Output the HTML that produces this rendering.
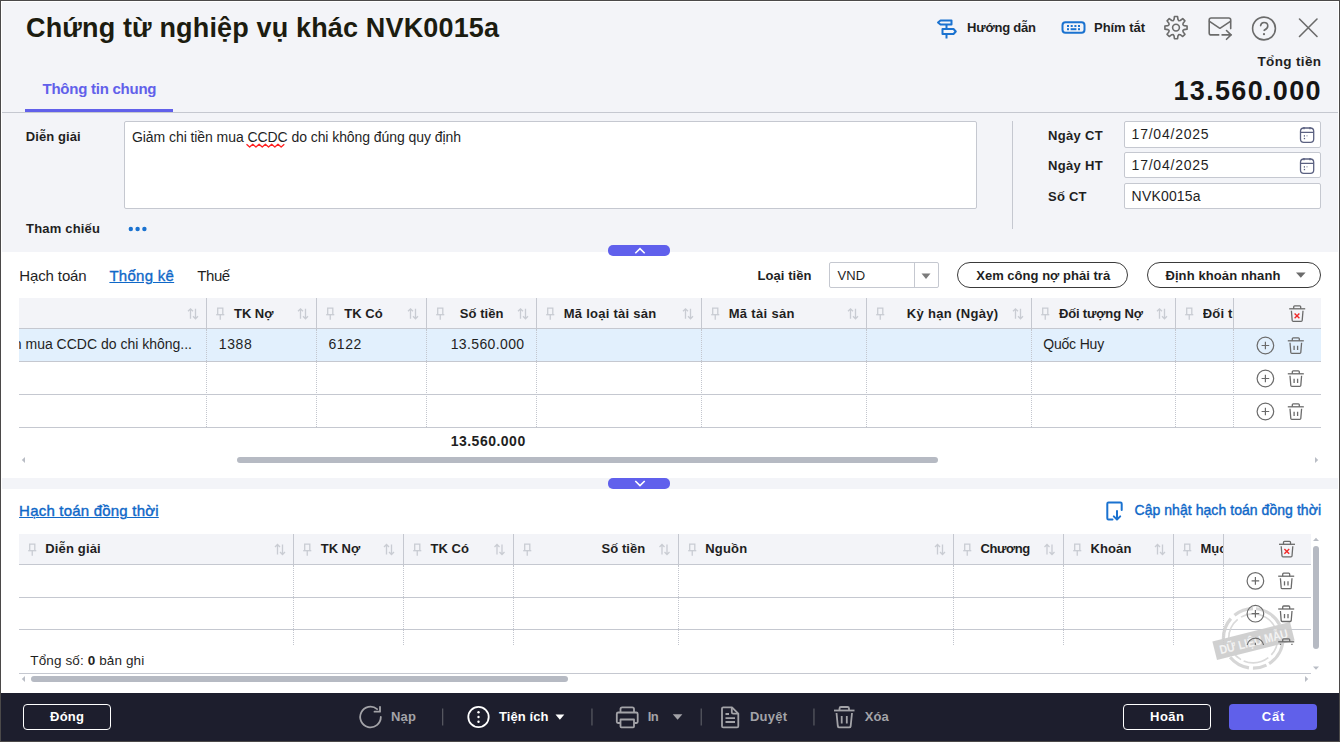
<!DOCTYPE html>
<html><head><meta charset="utf-8"><title>Chứng từ nghiệp vụ khác</title>
<style>
html,body{margin:0;padding:0;}
body{width:1340px;height:742px;overflow:hidden;position:relative;background:#4b4949;font-family:'Liberation Sans', sans-serif;}
svg{position:absolute;overflow:visible;}
</style></head><body>
<div style="position:absolute;left:1px;top:1px;width:1338px;height:740px;background:#ffffff;"></div>
<div style="position:absolute;left:2px;top:2px;width:1336px;height:250px;background:#f3f4f8;"></div>
<div style="position:absolute;left:2px;top:112px;width:1336px;height:1px;background:#c5c8d0;"></div>
<div style="position:absolute;left:25px;top:109px;width:148px;height:3px;background:#6160ea;"></div>
<div style="position:absolute;left:2px;top:478px;width:1336px;height:11px;background:#f3f4f8;"></div>
<div style="position:absolute;left:1px;top:693px;width:1338px;height:48px;background:#1d1e2d;"></div>
<svg style="left:0;top:0" width="1340" height="60"><g fill="none" stroke="#1a72d0" stroke-width="2" stroke-linejoin="round">
<path d="M940.5 20.5 H951.5 V24.5 H940.5 L938 22.5 Z"/>
<path d="M942.5 29 H953.5 L955.8 31.5 L953.5 34 H942.5 Z"/>
<path d="M946.5 25 V29 M946.5 34 V38.5"/>
</g>
<g fill="none" stroke="#1a72d0" stroke-width="2"><rect x="1062.5" y="22.3" width="22" height="10.4" rx="3"/></g>
<g fill="#1a72d0"><rect x="1067" y="25" width="2" height="2"/><rect x="1070.7" y="25" width="2" height="2"/><rect x="1074.4" y="25" width="2" height="2"/><rect x="1078" y="25" width="2" height="2"/>
<rect x="1067" y="28.2" width="2" height="2"/><rect x="1070.6" y="28.2" width="5.8" height="2"/><rect x="1078" y="28.2" width="2" height="2"/></g>
</svg>
<svg style="left:0;top:0" width="1340" height="60"><g fill="none" stroke="#6b6b6b" stroke-width="1.6" stroke-linejoin="round" stroke-linecap="round">
<path d="M1173.13 20.67 L1173.99 19.55 L1174.44 16.51 L1177.56 16.51 L1178.01 19.55 L1178.87 20.67 L1180.27 20.49 L1182.74 18.66 L1184.94 20.86 L1183.11 23.33 L1182.93 24.73 L1184.05 25.59 L1187.09 26.04 L1187.09 29.16 L1184.05 29.61 L1182.93 30.47 L1183.11 31.87 L1184.94 34.34 L1182.74 36.54 L1180.27 34.71 L1178.87 34.53 L1178.01 35.65 L1177.56 38.69 L1174.44 38.69 L1173.99 35.65 L1173.13 34.53 L1171.73 34.71 L1169.26 36.54 L1167.06 34.34 L1168.89 31.87 L1169.07 30.47 L1167.95 29.61 L1164.91 29.16 L1164.91 26.04 L1167.95 25.59 L1169.07 24.73 L1168.89 23.33 L1167.06 20.86 L1169.26 18.66 L1171.73 20.49 Z"/>
<circle cx="1176" cy="27.6" r="3.4"/>
<path d="M1218.7 34.9 H1211.2 Q1209.2 34.9 1209.2 32.9 V20 Q1209.2 18 1211.2 18 H1228.7 Q1230.7 18 1230.7 20 V28.6"/>
<path d="M1209.5 21.3 L1219.9 28.3 L1230.4 21.3"/>
<path d="M1222.1 34.9 H1231.3 M1226.5 30.5 L1231 34.9 L1226.5 39.3"/>
<circle cx="1264" cy="28.5" r="11.4"/>
<path d="M1260.6 25.7 Q1261 22.5 1264 22.5 Q1267.8 22.5 1267.8 26 Q1267.8 28.4 1264.2 30.3"/>
<path d="M1299.5 19 L1317 36.5 M1317 19 L1299.5 36.5"/>
</g><circle cx="1264" cy="34.2" r="1.1" fill="#6b6b6b"/></svg>
<div style="position:absolute;left:124px;top:121px;width:853px;height:88px;background:#ffffff;box-sizing:border-box;border:1px solid #c5c8d0;border-radius:2px;"></div>
<svg style="left:0;top:0" width="1340" height="200"><path d="M246.5 144.2 l3.15 2.8 l3.15 -2.8 l3.15 2.8 l3.15 -2.8 l3.15 2.8 l3.15 -2.8 l3.15 2.8 l3.15 -2.8 l3.15 2.8 l3.15 -2.8 l3.15 2.8 l3.15 -2.8" fill="none" stroke="#ff2020" stroke-width="1.3" stroke-linejoin="round"/></svg>
<svg style="left:0;top:0" width="1340" height="260"><g fill="#1a72d0"><circle cx="130.8" cy="229" r="2.2"/><circle cx="137.6" cy="229" r="2.2"/><circle cx="144.4" cy="229" r="2.2"/></g></svg>
<div style="position:absolute;left:1012px;top:121px;width:1px;height:108px;background:#c5c8d0;"></div>
<div style="position:absolute;left:1124px;top:121px;width:197px;height:27px;background:#ffffff;box-sizing:border-box;border:1px solid #c5c8d0;border-radius:2px;"></div>
<div style="position:absolute;left:1124px;top:152px;width:197px;height:26px;background:#ffffff;box-sizing:border-box;border:1px solid #c5c8d0;border-radius:2px;"></div>
<div style="position:absolute;left:1124px;top:183px;width:197px;height:26px;background:#ffffff;box-sizing:border-box;border:1px solid #c5c8d0;border-radius:2px;"></div>
<svg style="left:0;top:0" width="1340" height="200"><g fill="none" stroke="#5b6181" stroke-width="1.3"><rect x="1300.5" y="128" width="13.2" height="14.3" rx="3.3"/><path d="M1304 127 v2.3 M1310 127 v2.3 M1300.5 132.3 h13.2"/></g><g fill="#5b6181"><rect x="1303.8" y="135.2" width="1.2" height="1.4"/><rect x="1306.4" y="135.2" width="1.2" height="1.2" opacity="0.6"/><rect x="1303.8" y="137.9" width="1.3" height="1.3"/></g></svg>
<svg style="left:0;top:0" width="1340" height="200"><g fill="none" stroke="#5b6181" stroke-width="1.3"><rect x="1300.5" y="159" width="13.2" height="14.3" rx="3.3"/><path d="M1304 158 v2.3 M1310 158 v2.3 M1300.5 163.3 h13.2"/></g><g fill="#5b6181"><rect x="1303.8" y="166.2" width="1.2" height="1.4"/><rect x="1306.4" y="166.2" width="1.2" height="1.2" opacity="0.6"/><rect x="1303.8" y="168.9" width="1.3" height="1.3"/></g></svg>
<div style="position:absolute;left:608px;top:245px;width:62px;height:11px;background:#6060ec;border-radius:5px;"></div>
<svg style="left:0;top:0" width="1340" height="260"><path d="M635.3 253.2 L640 248.6 L644.7 253.2" fill="none" stroke="#fff" stroke-width="1.6"/></svg>
<div style="position:absolute;left:829px;top:262px;width:110px;height:26px;background:#ffffff;box-sizing:border-box;border:1px solid #c5c8d0;border-radius:2px;"></div>
<div style="position:absolute;left:914px;top:263px;width:1px;height:24px;background:#c5c8d0;"></div>
<svg style="left:0;top:0" width="1340" height="300"><path d="M921.5 273.5 H930.5 L926 279 Z" fill="#7b7b7b"/><path d="M1296 272.5 H1305.6 L1300.8 277.8 Z" fill="#6b6b6b"/></svg>
<div style="position:absolute;left:957px;top:262px;width:171px;height:26px;background:transparent;box-sizing:border-box;border:1px solid #3a3a3a;border-radius:13px;"></div>
<div style="position:absolute;left:1147px;top:262px;width:174px;height:26px;background:transparent;box-sizing:border-box;border:1px solid #3a3a3a;border-radius:13px;"></div>
<div style="position:absolute;left:19px;top:298px;width:1302px;height:30px;background:#f3f4f8;"></div>
<div style="position:absolute;left:19px;top:328px;width:1302px;height:1px;background:#c5c8d0;"></div>
<div style="position:absolute;left:19px;top:329px;width:1302px;height:32px;background:#e2f0fd;"></div>
<div style="position:absolute;left:19px;top:361px;width:1302px;height:1px;background:#c5c8d0;"></div>
<div style="position:absolute;left:19px;top:394px;width:1302px;height:1px;background:#c5c8d0;"></div>
<div style="position:absolute;left:19px;top:427px;width:1302px;height:1px;background:#c5c8d0;"></div>
<div style="position:absolute;left:206px;top:298px;width:1px;height:30px;background:#c5c8d0;"></div>
<div style="position:absolute;left:206px;top:329px;width:0;height:98px;border-left:1px dotted #c3c6ce;"></div>
<div style="position:absolute;left:316px;top:298px;width:1px;height:30px;background:#c5c8d0;"></div>
<div style="position:absolute;left:316px;top:329px;width:0;height:98px;border-left:1px dotted #c3c6ce;"></div>
<div style="position:absolute;left:426px;top:298px;width:1px;height:30px;background:#c5c8d0;"></div>
<div style="position:absolute;left:426px;top:329px;width:0;height:98px;border-left:1px dotted #c3c6ce;"></div>
<div style="position:absolute;left:536px;top:298px;width:1px;height:30px;background:#c5c8d0;"></div>
<div style="position:absolute;left:536px;top:329px;width:0;height:98px;border-left:1px dotted #c3c6ce;"></div>
<div style="position:absolute;left:701px;top:298px;width:1px;height:30px;background:#c5c8d0;"></div>
<div style="position:absolute;left:701px;top:329px;width:0;height:98px;border-left:1px dotted #c3c6ce;"></div>
<div style="position:absolute;left:866px;top:298px;width:1px;height:30px;background:#c5c8d0;"></div>
<div style="position:absolute;left:866px;top:329px;width:0;height:98px;border-left:1px dotted #c3c6ce;"></div>
<div style="position:absolute;left:1031px;top:298px;width:1px;height:30px;background:#c5c8d0;"></div>
<div style="position:absolute;left:1031px;top:329px;width:0;height:98px;border-left:1px dotted #c3c6ce;"></div>
<div style="position:absolute;left:1175px;top:298px;width:1px;height:30px;background:#c5c8d0;"></div>
<div style="position:absolute;left:1175px;top:329px;width:0;height:98px;border-left:1px dotted #c3c6ce;"></div>
<div style="position:absolute;left:1233px;top:298px;width:1px;height:30px;background:#c5c8d0;"></div>
<div style="position:absolute;left:1233px;top:329px;width:0;height:98px;border-left:1px dotted #c3c6ce;"></div>
<svg style="left:0;top:0" width="1" height="1"><g fill="none" stroke="#c9ccd3" stroke-width="1.3" stroke-linejoin="miter"><path d="M190.5 318.8 V308.8 M188 311.3 L190.5 308.8 L193 311.3"/><path d="M195.5 308.8 V318.8 M193 316.3 L195.5 318.8 L198 316.3"/></g></svg>
<svg style="left:0;top:0" width="1" height="1"><g fill="none" stroke="#c9ccd3" stroke-width="1.3"><path d="M217.7 314.5 V308.2 H222.8 V314.5"/><path d="M216.2 314.7 H224.3"/><path d="M220.25 314.7 V319.7"/></g></svg>
<svg style="left:0;top:0" width="1" height="1"><g fill="none" stroke="#c9ccd3" stroke-width="1.3" stroke-linejoin="miter"><path d="M300.5 318.8 V308.8 M298 311.3 L300.5 308.8 L303 311.3"/><path d="M305.5 308.8 V318.8 M303 316.3 L305.5 318.8 L308 316.3"/></g></svg>
<svg style="left:0;top:0" width="1" height="1"><g fill="none" stroke="#c9ccd3" stroke-width="1.3"><path d="M327.7 314.5 V308.2 H332.8 V314.5"/><path d="M326.2 314.7 H334.3"/><path d="M330.25 314.7 V319.7"/></g></svg>
<svg style="left:0;top:0" width="1" height="1"><g fill="none" stroke="#c9ccd3" stroke-width="1.3" stroke-linejoin="miter"><path d="M410.5 318.8 V308.8 M408 311.3 L410.5 308.8 L413 311.3"/><path d="M415.5 308.8 V318.8 M413 316.3 L415.5 318.8 L418 316.3"/></g></svg>
<svg style="left:0;top:0" width="1" height="1"><g fill="none" stroke="#c9ccd3" stroke-width="1.3"><path d="M437.7 314.5 V308.2 H442.8 V314.5"/><path d="M436.2 314.7 H444.3"/><path d="M440.25 314.7 V319.7"/></g></svg>
<svg style="left:0;top:0" width="1" height="1"><g fill="none" stroke="#c9ccd3" stroke-width="1.3" stroke-linejoin="miter"><path d="M520.5 318.8 V308.8 M518 311.3 L520.5 308.8 L523 311.3"/><path d="M525.5 308.8 V318.8 M523 316.3 L525.5 318.8 L528 316.3"/></g></svg>
<svg style="left:0;top:0" width="1" height="1"><g fill="none" stroke="#c9ccd3" stroke-width="1.3"><path d="M547.7 314.5 V308.2 H552.8 V314.5"/><path d="M546.2 314.7 H554.3"/><path d="M550.25 314.7 V319.7"/></g></svg>
<svg style="left:0;top:0" width="1" height="1"><g fill="none" stroke="#c9ccd3" stroke-width="1.3" stroke-linejoin="miter"><path d="M685.5 318.8 V308.8 M683 311.3 L685.5 308.8 L688 311.3"/><path d="M690.5 308.8 V318.8 M688 316.3 L690.5 318.8 L693 316.3"/></g></svg>
<svg style="left:0;top:0" width="1" height="1"><g fill="none" stroke="#c9ccd3" stroke-width="1.3"><path d="M712.7 314.5 V308.2 H717.8 V314.5"/><path d="M711.2 314.7 H719.3"/><path d="M715.25 314.7 V319.7"/></g></svg>
<svg style="left:0;top:0" width="1" height="1"><g fill="none" stroke="#c9ccd3" stroke-width="1.3" stroke-linejoin="miter"><path d="M850.5 318.8 V308.8 M848 311.3 L850.5 308.8 L853 311.3"/><path d="M855.5 308.8 V318.8 M853 316.3 L855.5 318.8 L858 316.3"/></g></svg>
<svg style="left:0;top:0" width="1" height="1"><g fill="none" stroke="#c9ccd3" stroke-width="1.3"><path d="M877.7 314.5 V308.2 H882.8 V314.5"/><path d="M876.2 314.7 H884.3"/><path d="M880.25 314.7 V319.7"/></g></svg>
<svg style="left:0;top:0" width="1" height="1"><g fill="none" stroke="#c9ccd3" stroke-width="1.3" stroke-linejoin="miter"><path d="M1015.5 318.8 V308.8 M1013 311.3 L1015.5 308.8 L1018 311.3"/><path d="M1020.5 308.8 V318.8 M1018 316.3 L1020.5 318.8 L1023 316.3"/></g></svg>
<svg style="left:0;top:0" width="1" height="1"><g fill="none" stroke="#c9ccd3" stroke-width="1.3"><path d="M1042.7 314.5 V308.2 H1047.8 V314.5"/><path d="M1041.2 314.7 H1049.3"/><path d="M1045.25 314.7 V319.7"/></g></svg>
<svg style="left:0;top:0" width="1" height="1"><g fill="none" stroke="#c9ccd3" stroke-width="1.3" stroke-linejoin="miter"><path d="M1159.5 318.8 V308.8 M1157 311.3 L1159.5 308.8 L1162 311.3"/><path d="M1164.5 308.8 V318.8 M1162 316.3 L1164.5 318.8 L1167 316.3"/></g></svg>
<svg style="left:0;top:0" width="1" height="1"><g fill="none" stroke="#c9ccd3" stroke-width="1.3"><path d="M1186.7 314.5 V308.2 H1191.8 V314.5"/><path d="M1185.2 314.7 H1193.3"/><path d="M1189.25 314.7 V319.7"/></g></svg>
<div style="position:absolute;left:1202.7px;top:306.5px;width:30px;height:16px;overflow:hidden;"><div style="position:absolute;left:0;top:0;font:bold 13px/13px 'Liberation Sans', sans-serif;color:#1f1f1f;white-space:pre;letter-spacing:0.2px">Đối tượng Có</div></div>
<div style="position:absolute;left:19px;top:337px;width:185px;height:17px;overflow:hidden;"><div style="position:absolute;right:12px;top:0;font:normal 14px/14px 'Liberation Sans', sans-serif;color:#1f1f1f;white-space:pre;letter-spacing:0px">Giảm chi tiền mua CCDC do chi không...</div></div>
<svg style="left:0;top:0" width="1" height="1"><g fill="none" stroke="#6b6b6b" stroke-width="1.3"><path d="M1289.2 308.8 H1305.2"/><path d="M1293.7 308.8 V306.8 Q1293.7 305.8 1294.7 305.8 H1299.7 Q1300.7 305.8 1300.7 306.8 V308.8"/><path d="M1291.4 310.8 L1292.2 320.5 Q1292.3 321.3 1293.2 321.3 H1301.2 Q1302.1000000000001 321.3 1302.2 320.5 L1303.0 310.8"/><path d="M1294.6000000000001 313.40000000000003 l4.8 4.8 M1299.4 313.40000000000003 l-4.8 4.8" stroke="#f02a2a" stroke-width="1.4"/></g></svg>
<svg style="left:0;top:0" width="1" height="1"><g fill="none" stroke="#6b6b6b" stroke-width="1.2"><circle cx="1265.4" cy="345.5" r="8.3"/><path d="M1261.6000000000001 345.5 H1269.2 M1265.4 341.7 V349.3"/></g></svg>
<svg style="left:0;top:0" width="1" height="1"><g fill="none" stroke="#6b6b6b" stroke-width="1.3"><path d="M1287.8 340.8 H1303.8"/><path d="M1292.3 340.8 V338.8 Q1292.3 337.8 1293.3 337.8 H1298.3 Q1299.3 337.8 1299.3 338.8 V340.8"/><path d="M1290.0 342.8 L1290.8 352.5 Q1290.8999999999999 353.3 1291.8 353.3 H1299.8 Q1300.7 353.3 1300.8 352.5 L1301.6 342.8"/><path d="M1294.1 345.8 V350.1 M1297.6 345.8 V350.1"/></g></svg>
<svg style="left:0;top:0" width="1" height="1"><g fill="none" stroke="#6b6b6b" stroke-width="1.2"><circle cx="1265.4" cy="378.5" r="8.3"/><path d="M1261.6000000000001 378.5 H1269.2 M1265.4 374.7 V382.3"/></g></svg>
<svg style="left:0;top:0" width="1" height="1"><g fill="none" stroke="#6b6b6b" stroke-width="1.3"><path d="M1287.8 373.8 H1303.8"/><path d="M1292.3 373.8 V371.8 Q1292.3 370.8 1293.3 370.8 H1298.3 Q1299.3 370.8 1299.3 371.8 V373.8"/><path d="M1290.0 375.8 L1290.8 385.5 Q1290.8999999999999 386.3 1291.8 386.3 H1299.8 Q1300.7 386.3 1300.8 385.5 L1301.6 375.8"/><path d="M1294.1 378.8 V383.1 M1297.6 378.8 V383.1"/></g></svg>
<svg style="left:0;top:0" width="1" height="1"><g fill="none" stroke="#6b6b6b" stroke-width="1.2"><circle cx="1265.4" cy="411.5" r="8.3"/><path d="M1261.6000000000001 411.5 H1269.2 M1265.4 407.7 V415.3"/></g></svg>
<svg style="left:0;top:0" width="1" height="1"><g fill="none" stroke="#6b6b6b" stroke-width="1.3"><path d="M1287.8 406.8 H1303.8"/><path d="M1292.3 406.8 V404.8 Q1292.3 403.8 1293.3 403.8 H1298.3 Q1299.3 403.8 1299.3 404.8 V406.8"/><path d="M1290.0 408.8 L1290.8 418.5 Q1290.8999999999999 419.3 1291.8 419.3 H1299.8 Q1300.7 419.3 1300.8 418.5 L1301.6 408.8"/><path d="M1294.1 411.8 V416.1 M1297.6 411.8 V416.1"/></g></svg>
<svg style="left:0;top:0" width="1" height="1"><path d="M25 457 V463 L21.8 460 Z" fill="#b9bdc5"/><path d="M1315 457 V463 L1318.2 460 Z" fill="#b9bdc5"/></svg>
<div style="position:absolute;left:237px;top:457px;width:701px;height:6px;background:#b6bac3;border-radius:3px;"></div>
<div style="position:absolute;left:608px;top:478px;width:62px;height:11px;background:#6060ec;border-radius:5px;"></div>
<svg style="left:0;top:0" width="1" height="1"><path d="M635.3 481 L640 485.6 L644.7 481" fill="none" stroke="#fff" stroke-width="1.6"/></svg>
<svg style="left:0;top:0" width="1" height="1"><g fill="none" stroke="#1a72d0" stroke-width="2" stroke-linecap="round" stroke-linejoin="round"><path d="M1112.5 519.5 H1108.5 Q1107.3 519.5 1107.3 518.3 V503.7 Q1107.3 502.5 1108.5 502.5 H1120.5 Q1121.7 502.5 1121.7 503.7 V510"/><path d="M1117 511 V519.5 M1113.8 516.4 L1117 519.6 L1120.2 516.4"/></g></svg>
<div style="position:absolute;left:19px;top:534px;width:1292px;height:30px;background:#f3f4f8;"></div>
<div style="position:absolute;left:19px;top:564px;width:1292px;height:1px;background:#c5c8d0;"></div>
<div style="position:absolute;left:19px;top:597px;width:1292px;height:1px;background:#c5c8d0;"></div>
<div style="position:absolute;left:19px;top:629px;width:1292px;height:1px;background:#c5c8d0;"></div>
<div style="position:absolute;left:19px;top:673px;width:1292px;height:1px;background:#c5c8d0;"></div>
<div style="position:absolute;left:293px;top:534px;width:1px;height:30px;background:#c5c8d0;"></div>
<div style="position:absolute;left:293px;top:565px;width:0;height:80px;border-left:1px dotted #c3c6ce;"></div>
<div style="position:absolute;left:403px;top:534px;width:1px;height:30px;background:#c5c8d0;"></div>
<div style="position:absolute;left:403px;top:565px;width:0;height:80px;border-left:1px dotted #c3c6ce;"></div>
<div style="position:absolute;left:513px;top:534px;width:1px;height:30px;background:#c5c8d0;"></div>
<div style="position:absolute;left:513px;top:565px;width:0;height:80px;border-left:1px dotted #c3c6ce;"></div>
<div style="position:absolute;left:678px;top:534px;width:1px;height:30px;background:#c5c8d0;"></div>
<div style="position:absolute;left:678px;top:565px;width:0;height:80px;border-left:1px dotted #c3c6ce;"></div>
<div style="position:absolute;left:953px;top:534px;width:1px;height:30px;background:#c5c8d0;"></div>
<div style="position:absolute;left:953px;top:565px;width:0;height:80px;border-left:1px dotted #c3c6ce;"></div>
<div style="position:absolute;left:1063px;top:534px;width:1px;height:30px;background:#c5c8d0;"></div>
<div style="position:absolute;left:1063px;top:565px;width:0;height:80px;border-left:1px dotted #c3c6ce;"></div>
<div style="position:absolute;left:1173px;top:534px;width:1px;height:30px;background:#c5c8d0;"></div>
<div style="position:absolute;left:1173px;top:565px;width:0;height:80px;border-left:1px dotted #c3c6ce;"></div>
<div style="position:absolute;left:1223px;top:534px;width:1px;height:30px;background:#c5c8d0;"></div>
<div style="position:absolute;left:1223px;top:565px;width:0;height:80px;border-left:1px dotted #c3c6ce;"></div>
<svg style="left:0;top:0" width="1" height="1"><g fill="none" stroke="#c9ccd3" stroke-width="1.3"><path d="M29.7 550.5 V544.2 H34.8 V550.5"/><path d="M28.2 550.7 H36.3"/><path d="M32.25 550.7 V555.7"/></g></svg>
<svg style="left:0;top:0" width="1" height="1"><g fill="none" stroke="#c9ccd3" stroke-width="1.3" stroke-linejoin="miter"><path d="M277.5 554.5 V544.5 M275 547 L277.5 544.5 L280 547"/><path d="M282.5 544.5 V554.5 M280 552 L282.5 554.5 L285 552"/></g></svg>
<svg style="left:0;top:0" width="1" height="1"><g fill="none" stroke="#c9ccd3" stroke-width="1.3"><path d="M304.7 550.5 V544.2 H309.8 V550.5"/><path d="M303.2 550.7 H311.3"/><path d="M307.25 550.7 V555.7"/></g></svg>
<svg style="left:0;top:0" width="1" height="1"><g fill="none" stroke="#c9ccd3" stroke-width="1.3" stroke-linejoin="miter"><path d="M386.5 554.5 V544.5 M384 547 L386.5 544.5 L389 547"/><path d="M391.5 544.5 V554.5 M389 552 L391.5 554.5 L394 552"/></g></svg>
<svg style="left:0;top:0" width="1" height="1"><g fill="none" stroke="#c9ccd3" stroke-width="1.3"><path d="M414.7 550.5 V544.2 H419.8 V550.5"/><path d="M413.2 550.7 H421.3"/><path d="M417.25 550.7 V555.7"/></g></svg>
<svg style="left:0;top:0" width="1" height="1"><g fill="none" stroke="#c9ccd3" stroke-width="1.3" stroke-linejoin="miter"><path d="M497.0 554.5 V544.5 M494.5 547 L497.0 544.5 L499.5 547"/><path d="M502.0 544.5 V554.5 M499.5 552 L502.0 554.5 L504.5 552"/></g></svg>
<svg style="left:0;top:0" width="1" height="1"><g fill="none" stroke="#c9ccd3" stroke-width="1.3"><path d="M524.7 550.5 V544.2 H529.8 V550.5"/><path d="M523.2 550.7 H531.3"/><path d="M527.25 550.7 V555.7"/></g></svg>
<svg style="left:0;top:0" width="1" height="1"><g fill="none" stroke="#c9ccd3" stroke-width="1.3" stroke-linejoin="miter"><path d="M662.0 554.5 V544.5 M659.5 547 L662.0 544.5 L664.5 547"/><path d="M667.0 544.5 V554.5 M664.5 552 L667.0 554.5 L669.5 552"/></g></svg>
<svg style="left:0;top:0" width="1" height="1"><g fill="none" stroke="#c9ccd3" stroke-width="1.3"><path d="M689.7 550.5 V544.2 H694.8 V550.5"/><path d="M688.2 550.7 H696.3"/><path d="M692.25 550.7 V555.7"/></g></svg>
<svg style="left:0;top:0" width="1" height="1"><g fill="none" stroke="#c9ccd3" stroke-width="1.3" stroke-linejoin="miter"><path d="M937.5 554.5 V544.5 M935 547 L937.5 544.5 L940 547"/><path d="M942.5 544.5 V554.5 M940 552 L942.5 554.5 L945 552"/></g></svg>
<svg style="left:0;top:0" width="1" height="1"><g fill="none" stroke="#c9ccd3" stroke-width="1.3"><path d="M964.7 550.5 V544.2 H969.8 V550.5"/><path d="M963.2 550.7 H971.3"/><path d="M967.25 550.7 V555.7"/></g></svg>
<svg style="left:0;top:0" width="1" height="1"><g fill="none" stroke="#c9ccd3" stroke-width="1.3" stroke-linejoin="miter"><path d="M1047.0 554.5 V544.5 M1044.5 547 L1047.0 544.5 L1049.5 547"/><path d="M1052.0 544.5 V554.5 M1049.5 552 L1052.0 554.5 L1054.5 552"/></g></svg>
<svg style="left:0;top:0" width="1" height="1"><g fill="none" stroke="#c9ccd3" stroke-width="1.3"><path d="M1074.7 550.5 V544.2 H1079.8 V550.5"/><path d="M1073.2 550.7 H1081.3"/><path d="M1077.25 550.7 V555.7"/></g></svg>
<svg style="left:0;top:0" width="1" height="1"><g fill="none" stroke="#c9ccd3" stroke-width="1.3" stroke-linejoin="miter"><path d="M1157.5 554.5 V544.5 M1155 547 L1157.5 544.5 L1160 547"/><path d="M1162.5 544.5 V554.5 M1160 552 L1162.5 554.5 L1165 552"/></g></svg>
<svg style="left:0;top:0" width="1" height="1"><g fill="none" stroke="#c9ccd3" stroke-width="1.3"><path d="M1184.7 550.5 V544.2 H1189.8 V550.5"/><path d="M1183.2 550.7 H1191.3"/><path d="M1187.25 550.7 V555.7"/></g></svg>
<div style="position:absolute;left:1200.5px;top:542px;width:22.5px;height:16px;overflow:hidden;"><div style="position:absolute;left:0;top:0;font:bold 13px/13px 'Liberation Sans', sans-serif;color:#1f1f1f;white-space:pre;">Mục</div></div>
<svg style="left:0;top:0" width="1" height="1"><g fill="none" stroke="#6b6b6b" stroke-width="1.3"><path d="M1279 544.3 H1295"/><path d="M1283.5 544.3 V542.3 Q1283.5 541.3 1284.5 541.3 H1289.5 Q1290.5 541.3 1290.5 542.3 V544.3"/><path d="M1281.2 546.3 L1282 556.0 Q1282.1 556.8 1283 556.8 H1291 Q1291.9 556.8 1292 556.0 L1292.8 546.3"/><path d="M1284.4 548.9 l4.8 4.8 M1289.2 548.9 l-4.8 4.8" stroke="#f02a2a" stroke-width="1.4"/></g></svg>
<svg style="left:0;top:0" width="1" height="1"><g opacity="0.9">
<circle cx="1253.2" cy="638.4" r="29.8" fill="none" stroke="#d2d2d2" stroke-width="3.2" stroke-dasharray="30 3 14 4 22 2 40 5 20 3 30"/>
<circle cx="1253.2" cy="638.4" r="24.5" fill="none" stroke="#d6d6d6" stroke-width="1.6" stroke-dasharray="18 4 26 3 12 5 30 4 40"/>
<g transform="rotate(-14 1253.5 641)"><rect x="1213.5" y="631.5" width="80" height="19" fill="#cccccc"/>
<text x="1253.5" y="646" text-anchor="middle" font-family="Liberation Sans" font-weight="bold" font-size="12.5" fill="#f2f2f2" textLength="70" lengthAdjust="spacingAndGlyphs">DỮ LIỆU MẪU</text></g></g></svg>
<div style="position:absolute;left:1230px;top:565px;width:80px;height:80px;overflow:hidden;"><div style="position:absolute;left:-1230px;top:-565px;width:1px;height:1px;"><svg style="left:0;top:0" width="1" height="1"><g fill="none" stroke="#6b6b6b" stroke-width="1.2"><circle cx="1255.4" cy="580.9" r="8.3"/><path d="M1251.6000000000001 580.9 H1259.2 M1255.4 577.1 V584.6999999999999"/></g></svg><svg style="left:0;top:0" width="1" height="1"><g fill="none" stroke="#6b6b6b" stroke-width="1.3"><path d="M1278.2 576.1999999999999 H1294.2"/><path d="M1282.7 576.1999999999999 V574.1999999999999 Q1282.7 573.1999999999999 1283.7 573.1999999999999 H1288.7 Q1289.7 573.1999999999999 1289.7 574.1999999999999 V576.1999999999999"/><path d="M1280.4 578.1999999999999 L1281.2 587.9 Q1281.3 588.6999999999999 1282.2 588.6999999999999 H1290.2 Q1291.1000000000001 588.6999999999999 1291.2 587.9 L1292.0 578.1999999999999"/><path d="M1284.5 581.1999999999999 V585.4999999999999 M1288.0 581.1999999999999 V585.4999999999999"/></g></svg><svg style="left:0;top:0" width="1" height="1"><g fill="none" stroke="#6b6b6b" stroke-width="1.2"><circle cx="1255.4" cy="613.7" r="8.3"/><path d="M1251.6000000000001 613.7 H1259.2 M1255.4 609.9000000000001 V617.5"/></g></svg><svg style="left:0;top:0" width="1" height="1"><g fill="none" stroke="#6b6b6b" stroke-width="1.3"><path d="M1278.2 609.0 H1294.2"/><path d="M1282.7 609.0 V607.0 Q1282.7 606.0 1283.7 606.0 H1288.7 Q1289.7 606.0 1289.7 607.0 V609.0"/><path d="M1280.4 611.0 L1281.2 620.7 Q1281.3 621.5 1282.2 621.5 H1290.2 Q1291.1000000000001 621.5 1291.2 620.7 L1292.0 611.0"/><path d="M1284.5 614.0 V618.3 M1288.0 614.0 V618.3"/></g></svg><svg style="left:0;top:0" width="1" height="1"><g fill="none" stroke="#6b6b6b" stroke-width="1.2"><circle cx="1255.4" cy="646.5" r="8.3"/><path d="M1251.6000000000001 646.5 H1259.2 M1255.4 642.7 V650.3"/></g></svg><svg style="left:0;top:0" width="1" height="1"><g fill="none" stroke="#6b6b6b" stroke-width="1.3"><path d="M1278.2 641.8 H1294.2"/><path d="M1282.7 641.8 V639.8 Q1282.7 638.8 1283.7 638.8 H1288.7 Q1289.7 638.8 1289.7 639.8 V641.8"/><path d="M1280.4 643.8 L1281.2 653.5 Q1281.3 654.3 1282.2 654.3 H1290.2 Q1291.1000000000001 654.3 1291.2 653.5 L1292.0 643.8"/><path d="M1284.5 646.8 V651.0999999999999 M1288.0 646.8 V651.0999999999999"/></g></svg></div></div>
<svg style="left:0;top:0" width="1" height="1"><path d="M1313 541 H1319 L1316 537.8 Z" fill="#b9bdc5"/><path d="M1313 666.5 H1319 L1316 669.7 Z" fill="#b9bdc5"/><path d="M25 676 V682 L21.8 679 Z" fill="#b9bdc5"/><path d="M1305 676 V682 L1308.2 679 Z" fill="#b9bdc5"/></svg>
<div style="position:absolute;left:1313px;top:546px;width:6px;height:103px;background:#b6bac3;border-radius:3px;"></div>
<div style="position:absolute;left:31px;top:676px;width:537px;height:6px;background:#b6bac3;border-radius:3px;"></div>
<div style="position:absolute;left:30.3px;top:654px;font:normal 13.5px/13px 'Liberation Sans', sans-serif;color:#1f1f1f;white-space:pre;letter-spacing:0.12px;">Tổng số: <b>0</b> bản ghi</div>
<div style="position:absolute;left:23px;top:704px;width:88px;height:26px;background:transparent;box-sizing:border-box;border:1.5px solid #ffffff;border-radius:4px;"></div>
<svg style="left:0;top:0" width="1" height="1"><g fill="none" stroke="#a3a3a8" stroke-width="1.8" stroke-linecap="round">
<path d="M380.8 717 A10.3 10.3 0 1 1 377.1 709.1"/><path d="M380 706.8 V711.7 H374.5" stroke-linecap="round" stroke-linejoin="round"/></g>
<g fill="none" stroke="#ffffff" stroke-width="1.8"><circle cx="478.5" cy="717" r="10.2"/></g>
<g fill="#ffffff"><circle cx="478.5" cy="712.3" r="1.2"/><circle cx="478.5" cy="717" r="1.2"/><circle cx="478.5" cy="721.7" r="1.2"/>
<path d="M555.5 714.5 H564.3 L559.9 719.7 Z"/></g>
<g fill="none" stroke="#a3a3a8" stroke-width="1.8" stroke-linejoin="round">
<path d="M620.5 712.5 V709 Q620.5 707.3 622.2 707.3 H632.3 Q634 707.3 634 709 V712.5"/>
<path d="M620 723 H618 Q616.8 723 616.8 721.8 V714 Q616.8 712.5 618.3 712.5 H636.2 Q637.7 712.5 637.7 714 V721.8 Q637.7 723 636.5 723 H634.5"/>
<path d="M620.5 719.5 H634 V726.5 Q634 727.3 633.2 727.3 H621.3 Q620.5 727.3 620.5 726.5 Z"/>
<path d="M722 708.5 Q722 707.3 723.2 707.3 H732 L738.3 713.6 V726.2 Q738.3 727.4 737.1 727.4 H723.2 Q722 727.4 722 726.2 Z"/>
<path d="M731.8 707.5 V712.2 Q731.8 713.7 733.3 713.7 H738"/>
<path d="M725.5 714 H729 M725.5 718.2 H735 M725.5 722 H735"/>
<path d="M834 710.5 H854.5"/><path d="M839.5 710.5 V708.5 Q839.5 707 841 707 H847.5 Q849 707 849 708.5 V710.5"/>
<path d="M836.5 713 L837.8 726 Q838 727.4 839.3 727.4 H849.2 Q850.5 727.4 850.7 726 L852 713"/>
<path d="M841.7 716 V723.5 M846.8 716 V723.5"/>
</g>
<path d="M672.8 714.3 H682.4 L677.6 719.8 Z" fill="#a3a3a8"/>
<g fill="#55565f"><rect x="442" y="708.5" width="1.3" height="17"/><rect x="591.3" y="708.5" width="1.3" height="17"/><rect x="700.6" y="708.5" width="1.3" height="17"/><rect x="813.3" y="708.5" width="1.3" height="17"/></g>
</svg>
<div style="position:absolute;left:1123px;top:704px;width:88px;height:26px;background:transparent;box-sizing:border-box;border:1.5px solid #ffffff;border-radius:4px;"></div>
<div style="position:absolute;left:1229px;top:704px;width:88px;height:26px;background:#6060ea;border-radius:4px;"></div>
<div style="position:absolute;left:26.00px;top:15px;font:bold 27px/27px 'Liberation Sans', sans-serif;color:#1c1c10;white-space:pre;letter-spacing:0.155px;">Chứng từ nghiệp vụ khác NVK0015a</div>
<div style="position:absolute;left:967.00px;top:21px;font:bold 13px/13px 'Liberation Sans', sans-serif;color:#1f1f1f;white-space:pre;letter-spacing:-0.207px;">Hướng dẫn</div>
<div style="position:absolute;left:1094.00px;top:21px;font:bold 13px/13px 'Liberation Sans', sans-serif;color:#1f1f1f;white-space:pre;letter-spacing:-0.042px;">Phím tắt</div>
<div style="position:absolute;left:1257.50px;top:55px;font:bold 13.5px/13.5px 'Liberation Sans', sans-serif;color:#1f1f1f;white-space:pre;letter-spacing:0.344px;">Tổng tiền</div>
<div style="position:absolute;left:1173.50px;top:78px;font:bold 27px/27px 'Liberation Sans', sans-serif;color:#151515;white-space:pre;letter-spacing:1.318px;">13.560.000</div>
<div style="position:absolute;left:42.50px;top:81px;font:bold 15px/15px 'Liberation Sans', sans-serif;color:#6160ea;white-space:pre;letter-spacing:-0.248px;">Thông tin chung</div>
<div style="position:absolute;left:25.70px;top:130px;font:bold 13px/13px 'Liberation Sans', sans-serif;color:#1f1f1f;white-space:pre;letter-spacing:0.102px;">Diễn giải</div>
<div style="position:absolute;left:132.00px;top:130px;font:normal 14px/14px 'Liberation Sans', sans-serif;color:#1f1f1f;white-space:pre;letter-spacing:-0.069px;">Giảm chi tiền mua CCDC do chi không đúng quy định</div>
<div style="position:absolute;left:26.00px;top:222px;font:bold 13px/13px 'Liberation Sans', sans-serif;color:#1f1f1f;white-space:pre;letter-spacing:0.194px;">Tham chiếu</div>
<div style="position:absolute;left:1048.00px;top:129px;font:bold 13px/13px 'Liberation Sans', sans-serif;color:#1f1f1f;white-space:pre;letter-spacing:0.311px;">Ngày CT</div>
<div style="position:absolute;left:1048.00px;top:159px;font:bold 13px/13px 'Liberation Sans', sans-serif;color:#1f1f1f;white-space:pre;letter-spacing:0.311px;">Ngày HT</div>
<div style="position:absolute;left:1048.00px;top:190px;font:bold 13px/13px 'Liberation Sans', sans-serif;color:#1f1f1f;white-space:pre;letter-spacing:0.234px;">Số CT</div>
<div style="position:absolute;left:1131.60px;top:127px;font:normal 14px/14px 'Liberation Sans', sans-serif;color:#1f1f1f;white-space:pre;letter-spacing:0.769px;">17/04/2025</div>
<div style="position:absolute;left:1131.60px;top:158px;font:normal 14px/14px 'Liberation Sans', sans-serif;color:#1f1f1f;white-space:pre;letter-spacing:0.769px;">17/04/2025</div>
<div style="position:absolute;left:1131.60px;top:188.5px;font:normal 14px/14px 'Liberation Sans', sans-serif;color:#1f1f1f;white-space:pre;letter-spacing:0.183px;">NVK0015a</div>
<div style="position:absolute;left:19.30px;top:268px;font:normal 15px/15px 'Liberation Sans', sans-serif;color:#1f1f1f;white-space:pre;letter-spacing:-0.124px;">Hạch toán</div>
<div style="position:absolute;left:109.40px;top:268px;font:normal 15px/15px 'Liberation Sans', sans-serif;color:#0f68c8;white-space:pre;letter-spacing:0.279px;text-decoration:underline;text-underline-offset:1px;-webkit-text-stroke:0.35px #0f68c8;">Thống kê</div>
<div style="position:absolute;left:197.20px;top:268px;font:normal 15px/15px 'Liberation Sans', sans-serif;color:#1f1f1f;white-space:pre;letter-spacing:-0.401px;">Thuế</div>
<div style="position:absolute;left:757.50px;top:269px;font:bold 13px/13px 'Liberation Sans', sans-serif;color:#1f1f1f;white-space:pre;letter-spacing:0.068px;">Loại tiền</div>
<div style="position:absolute;left:837.60px;top:269px;font:normal 13px/13px 'Liberation Sans', sans-serif;color:#1f1f1f;white-space:pre;letter-spacing:0.000px;">VND</div>
<div style="position:absolute;left:976.20px;top:269px;font:bold 13px/13px 'Liberation Sans', sans-serif;color:#1f1f1f;white-space:pre;letter-spacing:0.026px;">Xem công nợ phải trả</div>
<div style="position:absolute;left:1165.40px;top:269px;font:bold 13px/13px 'Liberation Sans', sans-serif;color:#1f1f1f;white-space:pre;letter-spacing:0.107px;">Định khoản nhanh</div>
<div style="position:absolute;left:234.00px;top:306.5px;font:bold 13px/13px 'Liberation Sans', sans-serif;color:#1f1f1f;white-space:pre;letter-spacing:-0.045px;">TK Nợ</div>
<div style="position:absolute;left:344.20px;top:306.5px;font:bold 13px/13px 'Liberation Sans', sans-serif;color:#1f1f1f;white-space:pre;letter-spacing:0.055px;">TK Có</div>
<div style="position:absolute;left:459.80px;top:306.5px;font:bold 13px/13px 'Liberation Sans', sans-serif;color:#1f1f1f;white-space:pre;letter-spacing:0.059px;">Số tiền</div>
<div style="position:absolute;left:563.70px;top:306.5px;font:bold 13px/13px 'Liberation Sans', sans-serif;color:#1f1f1f;white-space:pre;letter-spacing:0.259px;">Mã loại tài sản</div>
<div style="position:absolute;left:728.70px;top:306.5px;font:bold 13px/13px 'Liberation Sans', sans-serif;color:#1f1f1f;white-space:pre;letter-spacing:0.327px;">Mã tài sản</div>
<div style="position:absolute;left:906.80px;top:306.5px;font:bold 13px/13px 'Liberation Sans', sans-serif;color:#1f1f1f;white-space:pre;letter-spacing:0.333px;">Kỳ hạn (Ngày)</div>
<div style="position:absolute;left:1058.90px;top:306.5px;font:bold 13px/13px 'Liberation Sans', sans-serif;color:#1f1f1f;white-space:pre;letter-spacing:-0.152px;">Đối tượng Nợ</div>
<div style="position:absolute;left:218.80px;top:337px;font:normal 14px/14px 'Liberation Sans', sans-serif;color:#1f1f1f;white-space:pre;letter-spacing:0.615px;">1388</div>
<div style="position:absolute;left:328.60px;top:337px;font:normal 14px/14px 'Liberation Sans', sans-serif;color:#1f1f1f;white-space:pre;letter-spacing:0.481px;">6122</div>
<div style="position:absolute;left:450.70px;top:337px;font:normal 14px/14px 'Liberation Sans', sans-serif;color:#1f1f1f;white-space:pre;letter-spacing:0.369px;">13.560.000</div>
<div style="position:absolute;left:1043.20px;top:337px;font:normal 14px/14px 'Liberation Sans', sans-serif;color:#1f1f1f;white-space:pre;letter-spacing:-0.179px;">Quốc Huy</div>
<div style="position:absolute;left:450.70px;top:434px;font:bold 14px/14px 'Liberation Sans', sans-serif;color:#1f1f1f;white-space:pre;letter-spacing:0.491px;">13.560.000</div>
<div style="position:absolute;left:19.10px;top:503px;font:normal 15px/15px 'Liberation Sans', sans-serif;color:#0f68c8;white-space:pre;letter-spacing:0.207px;text-decoration:underline;text-underline-offset:1px;text-decoration-thickness:1px;-webkit-text-stroke:0.4px #0f68c8;">Hạch toán đồng thời</div>
<div style="position:absolute;left:1134.50px;top:503px;font:normal 14px/14px 'Liberation Sans', sans-serif;color:#0f68c8;white-space:pre;letter-spacing:0.052px;-webkit-text-stroke:0.4px #0f68c8;">Cập nhật hạch toán đồng thời</div>
<div style="position:absolute;left:45.30px;top:542px;font:bold 13px/13px 'Liberation Sans', sans-serif;color:#1f1f1f;white-space:pre;letter-spacing:0.152px;">Diễn giải</div>
<div style="position:absolute;left:320.80px;top:542px;font:bold 13px/13px 'Liberation Sans', sans-serif;color:#1f1f1f;white-space:pre;letter-spacing:-0.045px;">TK Nợ</div>
<div style="position:absolute;left:430.50px;top:542px;font:bold 13px/13px 'Liberation Sans', sans-serif;color:#1f1f1f;white-space:pre;letter-spacing:0.055px;">TK Có</div>
<div style="position:absolute;left:601.50px;top:542px;font:bold 13px/13px 'Liberation Sans', sans-serif;color:#1f1f1f;white-space:pre;letter-spacing:0.059px;">Số tiền</div>
<div style="position:absolute;left:705.20px;top:542px;font:bold 13px/13px 'Liberation Sans', sans-serif;color:#1f1f1f;white-space:pre;letter-spacing:0.211px;">Nguồn</div>
<div style="position:absolute;left:980.60px;top:542px;font:bold 13px/13px 'Liberation Sans', sans-serif;color:#1f1f1f;white-space:pre;letter-spacing:-0.435px;">Chương</div>
<div style="position:absolute;left:1090.40px;top:542px;font:bold 13px/13px 'Liberation Sans', sans-serif;color:#1f1f1f;white-space:pre;letter-spacing:0.137px;">Khoản</div>
<div style="position:absolute;left:50.00px;top:710px;font:bold 13px/13px 'Liberation Sans', sans-serif;color:#ffffff;white-space:pre;letter-spacing:0.260px;">Đóng</div>
<div style="position:absolute;left:391.00px;top:710px;font:bold 13px/13px 'Liberation Sans', sans-serif;color:#a3a3a8;white-space:pre;letter-spacing:0.219px;">Nạp</div>
<div style="position:absolute;left:499.00px;top:710px;font:bold 13px/13px 'Liberation Sans', sans-serif;color:#ffffff;white-space:pre;letter-spacing:0.087px;">Tiện ích</div>
<div style="position:absolute;left:647.70px;top:710px;font:bold 13px/13px 'Liberation Sans', sans-serif;color:#a3a3a8;white-space:pre;letter-spacing:-0.562px;">In</div>
<div style="position:absolute;left:750.00px;top:710px;font:bold 13px/13px 'Liberation Sans', sans-serif;color:#a3a3a8;white-space:pre;letter-spacing:0.219px;">Duyệt</div>
<div style="position:absolute;left:864.80px;top:710px;font:bold 13px/13px 'Liberation Sans', sans-serif;color:#a3a3a8;white-space:pre;letter-spacing:0.078px;">Xóa</div>
<div style="position:absolute;left:1150.00px;top:710px;font:bold 13px/13px 'Liberation Sans', sans-serif;color:#ffffff;white-space:pre;letter-spacing:0.500px;">Hoãn</div>
<div style="position:absolute;left:1261.75px;top:710px;font:bold 13px/13px 'Liberation Sans', sans-serif;color:#ffffff;white-space:pre;letter-spacing:0.773px;">Cất</div>
</body></html>
